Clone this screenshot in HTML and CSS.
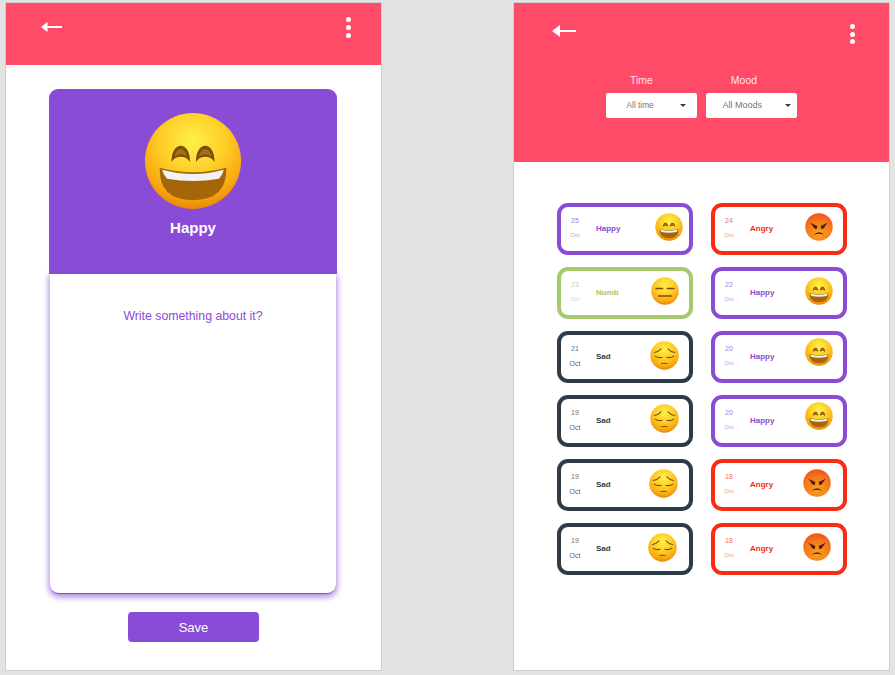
FILE: index.html
```html
<!DOCTYPE html>
<html>
	<head>
		<title>Mood diary</title>
		<meta charset="utf-8">
		<meta name="viewport" content="width=device-width, initial-scale=1">
		<link rel="stylesheet" href="styles.css">
	</head>
	<body>
		<svg class="defs" xmlns="http://www.w3.org/2000/svg" width="0" height="0">
			<defs>
				<radialGradient id="yellow" cx="50%" cy="30%" r="72%">
					<stop offset="0" stop-color="#fff04a"/>
					<stop offset="0.45" stop-color="#fdcf28"/>
					<stop offset="0.8" stop-color="#f9a910"/>
					<stop offset="1" stop-color="#e77f05"/>
				</radialGradient>
				<radialGradient id="red" cx="50%" cy="75%" r="78%">
					<stop offset="0" stop-color="#f9a01e"/>
					<stop offset="0.6" stop-color="#f67a1c"/>
					<stop offset="1" stop-color="#ee501a"/>
				</radialGradient>
				<symbol id="happy" viewBox="0 0 100 100">
					<circle cx="50" cy="50" r="49" fill="url(#yellow)"/>
					<path d="M28 51C28 29 47 29 47 51C43 44 32 44 28 51Z" fill="#7c4c08"/>
					<path d="M31 46C33 35 42 35 44 46C40 42 35 42 31 46Z" fill="#a5700f"/>
					<path d="M53 51C53 29 72 29 72 51C68 44 57 44 53 51Z" fill="#7c4c08"/>
					<path d="M56 46C58 35 67 35 69 46C65 42 60 42 56 46Z" fill="#a5700f"/>
					<path d="M16 57Q50 66 84 57Q85 90 50 90Q15 90 16 57Z" fill="#a5660a"/>
					<path d="M18.500 59Q50 67.500 81.500 59Q80.500 64 76.500 68Q50 73 23.500 68Q19.500 64 18.500 59Z" fill="#f2f2f2"/>
				</symbol>
				<symbol id="sad" viewBox="0 0 100 100">
					<circle cx="50" cy="50" r="49" fill="url(#yellow)"/>
					<g fill="none" stroke="#7c4f0c" stroke-width="3.500" stroke-linecap="round">
						<path d="M15 40Q28 38 38 27"/>
						<path d="M85 40Q72 38 62 27"/>
						<path d="M18 52Q28 60 42 56"/>
						<path d="M82 52Q72 60 58 56"/>
						<path d="M40 78Q50 75 60 78"/>
					</g>
				</symbol>
				<symbol id="numb" viewBox="0 0 100 100">
					<circle cx="50" cy="50" r="49" fill="url(#yellow)"/>
					<g fill="none" stroke="#7c4f0c" stroke-width="5" stroke-linecap="round">
						<path d="M18 41H42"/>
						<path d="M58 41H82"/>
						<path d="M27 68H73"/>
					</g>
				</symbol>
				<symbol id="angry" viewBox="0 0 100 100">
					<circle cx="50" cy="50" r="49" fill="url(#red)"/>
					<path d="M19 35L44 46L42 57Q32 57 28 46Z" fill="#4f1c10"/>
					<path d="M81 35L56 46L58 57Q68 57 72 46Z" fill="#4f1c10"/>
					<path d="M31 79Q50 58 69 79Q50 70 31 79Z" fill="#4f1c10"/>
				</symbol>
			</defs>
		</svg>

		<div class="desktop">
			<!-- entry screen -->
			<div class="phone">
				<div class="top top-short">
					<svg class="back" width="22" height="12" viewBox="0 0 22 12"><path d="M0 6L6.500 1V5H21V7H6.500V11Z" fill="#fff"/></svg>
					<div class="dots"><span></span><span></span><span></span></div>
				</div>
				<div class="entry">
					<div class="entry_head">
						<svg class="entry_emoji"><use href="#happy"/></svg>
						<h1>Happy</h1>
					</div>
					<div class="entry_body">Write something about it?</div>
				</div>
				<button class="save">Save</button>
			</div>

			<!-- history screen -->
			<div class="phone">
				<div class="top top-tall">
					<div class="top_row">
						<svg class="back-big" width="24" height="14" viewBox="0 0 24 14"><path d="M0 7L8 1V6H24V8H8V13Z" fill="#fff"/></svg>
						<div class="dots"><span></span><span></span><span></span></div>
					</div>
					<div class="filters">
						<div class="filter">
							<label>Time</label>
							<div class="select select-small">All time<i></i></div>
						</div>
						<div class="filter">
							<label>Mood</label>
							<div class="select">All Moods<i></i></div>
						</div>
					</div>
				</div>
				<div class="list">
					<div class="card happy"><div class="date"><b>25</b><small>Oct</small></div><span class="name">Happy</span><svg class="up2"><use href="#happy"/></svg></div>
					<div class="card angry"><div class="date"><b>24</b><small>Oct</small></div><span class="name">Angry</span><svg class="r10 up2"><use href="#angry"/></svg></div>

					<div class="card numb"><div class="date"><b>23</b><small>Oct</small></div><span class="name">Numb</span><svg class="r10 up2"><use href="#numb"/></svg></div>
					<div class="card happy"><div class="date"><b>22</b><small>Oct</small></div><span class="name">Happy</span><svg class="r10 up2"><use href="#happy"/></svg></div>

					<div class="card sad"><div class="date"><b>21</b><small>Oct</small></div><span class="name">Sad</span><svg class="r10 up2"><use href="#sad"/></svg></div>
					<div class="card happy"><div class="date"><b>20</b><small>Oct</small></div><span class="name">Happy</span><svg class="r10 up5"><use href="#happy"/></svg></div>

					<div class="card sad"><div class="date"><b>19</b><small>Oct</small></div><span class="name">Sad</span><svg class="r10 up3"><use href="#sad"/></svg></div>
					<div class="card happy"><div class="date"><b>20</b><small>Oct</small></div><span class="name">Happy</span><svg class="r10 up5"><use href="#happy"/></svg></div>

					<div class="card sad"><div class="date"><b>19</b><small>Oct</small></div><span class="name">Sad</span><svg class="r11 up2"><use href="#sad"/></svg></div>
					<div class="card angry"><div class="date"><b>18</b><small>Oct</small></div><span class="name">Angry</span><svg class="r12 up2"><use href="#angry"/></svg></div>

					<div class="card sad"><div class="date"><b>19</b><small>Oct</small></div><span class="name">Sad</span><svg class="r12 up2"><use href="#sad"/></svg></div>
					<div class="card angry"><div class="date"><b>18</b><small>Oct</small></div><span class="name">Angry</span><svg class="r12 up2"><use href="#angry"/></svg></div>
				</div>
			</div>
		</div>
	</body>
</html>
```

FILE: styles.css
```css
html{
	font-family: 'Liberation Sans', Arial, sans-serif;
	font-size: 16px;
}
body{
	margin: 0;
	background-color: #e3e3e3;
}
.defs{
	display: block;
	height: 0;
}
.desktop{
	display: flex;
	gap: 131px;
	padding: 2px 5px;
}
.phone{
	box-sizing: border-box;
	width: 377px;
	height: 669px;
	background-color: #fff;
	border: 1px solid #cfcfcf;
	display: flex;
	flex-direction: column;
	align-items: center;
}

/* pink header */
.top{
	box-sizing: border-box;
	width: 100%;
	background-color: #ff4a68;
}
.top-short{
	height: 62px;
	padding: 14px 30px 0 35px;
	display: flex;
	justify-content: space-between;
	align-items: flex-start;
}
.top-short .back{
	margin-top: 4px;
}
.top-short .dots{
	gap: 3px;
}
.top-tall{
	height: 159px;
}
.top_row{
	padding: 21px 34px 0 38px;
	display: flex;
	justify-content: space-between;
	align-items: flex-start;
}
.dots{
	display: flex;
	flex-direction: column;
	gap: 2.500px;
}
.dots span{
	width: 5px;
	height: 5px;
	border-radius: 50%;
	background-color: #fff;
}

/* entry screen */
.entry{
	margin: 24px 1px 0 0;
	width: 288px;
}
.entry_head{
	box-sizing: border-box;
	height: 185px;
	padding-top: 23px;
	background-color: #8a4bd6;
	border-radius: 9px 9px 0 0;
	text-align: center;
	color: #fff;
}
.entry_emoji{
	display: block;
	width: 98px;
	height: 98px;
	margin: 0 auto;
}
.entry_head h1{
	margin: 8px 0 0;
	font-size: 15px;
	line-height: 20px;
	font-weight: bold;
}
.entry_body{
	box-sizing: border-box;
	height: 320px;
	margin: 0 1px;
	padding-top: 34px;
	background-color: #fff;
	border-radius: 0 0 9px 9px;
	border-bottom: 1px solid #8a4bd6;
	box-shadow: 0 2px 6px 1px rgba(138, 75, 214, 0.7);
	text-align: center;
	font-size: 12.300px;
	line-height: 16px;
	color: #8a4bd6;
}
.save{
	margin-top: 18px;
	width: 131px;
	height: 30px;
	border: 0;
	border-radius: 4px;
	background-color: #8a4bd6;
	color: #fff;
	font-family: inherit;
	font-size: 13px;
}

/* filters */
.filters{
	margin-top: 30px;
	display: flex;
	justify-content: center;
	gap: 9px;
	padding-right: 1px;
}
.filter{
	display: flex;
	flex-direction: column;
	align-items: center;
	width: 91px;
}
.filter label{
	color: #ffe3e8;
	font-size: 10.500px;
	line-height: 12px;
	margin: 0 19px 7px 0;
}
.filter:last-child label{
	margin-right: 14px;
}
.select{
	box-sizing: border-box;
	width: 91px;
	height: 25px;
	border-radius: 2px;
	background-color: #fff;
	color: #777;
	font-size: 9px;
	line-height: 25px;
	padding-left: 17px;
	position: relative;
}
.select-small{
	font-size: 8.300px;
	padding-left: 21px;
}
.select i{
	position: absolute;
	right: 6px;
	top: 11px;
	border-top: 3px solid #2f3b47;
	border-left: 3px solid transparent;
	border-right: 3px solid transparent;
}
.select-small i{
	right: 11px;
}

/* history list */
.list{
	margin-top: 41px;
	display: grid;
	grid-template-columns: 136px 136px;
	grid-auto-rows: 52px;
	column-gap: 18px;
	row-gap: 12px;
	margin-right: -1px;
}
.card{
	box-sizing: border-box;
	border: 4px solid;
	border-radius: 11px;
	display: flex;
	align-items: center;
}
.card svg{
	width: 28px;
	height: 28px;
	margin-left: auto;
	margin-right: 6px;
}
.card.sad svg{
	width: 29px;
	height: 29px;
}
.date{
	width: 28px;
	display: flex;
	flex-direction: column;
	align-items: center;
	gap: 6px;
	margin-bottom: 3px;
	font-size: 7px;
	line-height: 9px;
}
.date b{
	font-weight: normal;
	opacity: 0.75;
}
.date small{
	font-size: 6px;
	opacity: 0.55;
}
.name{
	margin: 0 0 2px 7px;
	font-size: 8px;
	font-weight: bold;
}
.happy{ border-color: #8a4bd6; color: #8a4bd6; }
.angry{ border-color: #f92c12; color: #f92c12; }
.numb{ border-color: #a4c96f; color: #a4c96f; }
.sad{ border-color: #2f3b47; color: #2f3b47; }
.sad small{
	font-size: 7px;
	opacity: 0.8;
}
.card .r10{ margin-right: 10px; }
.card .r11{ margin-right: 11px; }
.card .r12{ margin-right: 12px; }
.card .up2{ margin-bottom: 4px; }
.card .up3{ margin-bottom: 6px; }
.card .up5{ margin-bottom: 10px; }
```
